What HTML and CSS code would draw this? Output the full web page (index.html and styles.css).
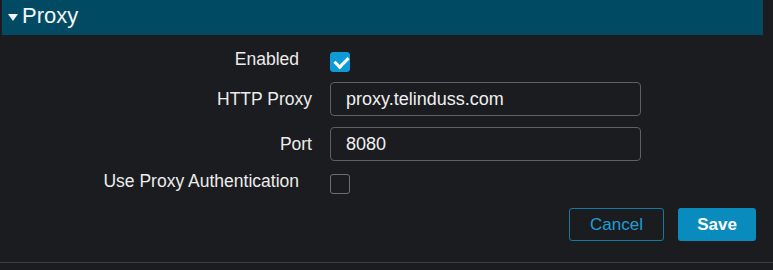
FILE: index.html
```html
<!DOCTYPE html>
<html>
<head>
  <meta charset="UTF-8">
  <title>Proxy</title>
  <link rel="stylesheet" href="styles.css">
</head>
<body>
  <div class="panel">
    <div class="panel-header">
      <span class="caret"></span>
      <h2>Proxy</h2>
    </div>

    <form class="proxy-form">
      <div class="form-row row-enabled">
        <label class="field-label label-check" for="enabled">Enabled</label>
        <input type="checkbox" id="enabled" checked>
        <label class="check" for="enabled"></label>
      </div>

      <div class="form-row row-input">
        <label class="field-label" for="httpProxy">HTTP Proxy</label>
        <input type="text" id="httpProxy" class="text-input" value="proxy.telinduss.com">
      </div>

      <div class="form-row row-input row-port">
        <label class="field-label" for="port">Port</label>
        <input type="text" id="port" class="text-input" value="8080">
      </div>

      <div class="form-row row-auth">
        <label class="field-label label-check" for="useAuth">Use Proxy Authentication</label>
        <input type="checkbox" id="useAuth">
        <label class="check" for="useAuth"></label>
      </div>
    </form>

    <div class="actions">
      <button type="button" class="cancel-btn">Cancel</button>
      <button type="button" class="save-btn">Save</button>
    </div>
  </div>
</body>
</html>
```

FILE: styles.css
```css
:root {
  --bg-primary: #1b1c1f;
  --header-bg: #004b63;
  --text-primary: #ececec;
  --border-color: #5e5f63;
  --accent: #0d9ad6;
  --button-primary: #0a8bbd;
  --divider: #3c3d41;
}

* {
  box-sizing: border-box;
  margin: 0;
  padding: 0;
}

html, body {
  height: 100%;
  overflow: hidden;
}

body {
  font-family: 'Liberation Sans', Arial, sans-serif;
  background-color: var(--bg-primary);
  color: var(--text-primary);
}

.panel {
  height: 263px;
  border-bottom: 1px solid var(--divider);
}

.panel-header {
  display: flex;
  align-items: center;
  gap: 4px;
  height: 35px;
  margin: 0 10px 0 2px;
  padding-left: 6px;
  padding-bottom: 4px;
  background: var(--header-bg);
  color: #f2f6f8;
}

.caret {
  width: 0;
  height: 0;
  border-left: 5px solid transparent;
  border-right: 5px solid transparent;
  border-top: 7px solid #f2f6f8;
  margin-top: 4px;
}

.panel-header h2 {
  font-size: 22px;
  font-weight: 400;
}

.proxy-form {
  display: flex;
  flex-direction: column;
  padding-top: 17px;
}

.form-row {
  display: flex;
  align-items: center;
  gap: 18px;
}

.row-input {
  margin-top: 10px;
}

.row-port {
  margin-top: 11px;
}

.row-auth {
  margin-top: 13px;
}

.field-label {
  width: 312px;
  font-size: 17.5px;
  text-align: right;
  line-height: 20px;
  color: var(--text-primary);
}

.label-check {
  align-self: flex-start;
  margin-top: -3px;
  padding-right: 13px;
}

input[type="checkbox"] {
  display: none;
}

.check {
  position: relative;
  width: 20px;
  height: 20px;
  border: 1px solid #6c6d71;
  border-radius: 3px;
}

input[type="checkbox"]:checked + .check {
  background: var(--accent);
  border-color: var(--accent);
}

input[type="checkbox"]:checked + .check:after {
  content: '';
  position: absolute;
  left: 6px;
  top: 1px;
  width: 6px;
  height: 11px;
  border-right: 3px solid #fff;
  border-bottom: 3px solid #fff;
  transform: rotate(45deg);
}

.text-input {
  width: 311px;
  height: 34px;
  padding: 0 15px;
  border: 1px solid var(--border-color);
  border-radius: 4px;
  background: transparent;
  color: #f0f0f0;
  font-family: 'Liberation Sans', Arial, sans-serif;
  font-size: 18px;
}

.text-input:focus {
  outline: none;
  border-color: var(--accent);
}

.actions {
  display: flex;
  justify-content: flex-end;
  gap: 14px;
  margin: 14px 17px 0 0;
}

button {
  height: 33px;
  border-radius: 3px;
  font-family: 'Liberation Sans', Arial, sans-serif;
  font-size: 17px;
  cursor: pointer;
}

.cancel-btn {
  width: 95px;
  background: transparent;
  color: #1d9fd8;
  border: 1px solid #19789e;
}

.save-btn {
  width: 78px;
  background: var(--button-primary);
  color: #fff;
  font-weight: 700;
  border: none;
}
```
